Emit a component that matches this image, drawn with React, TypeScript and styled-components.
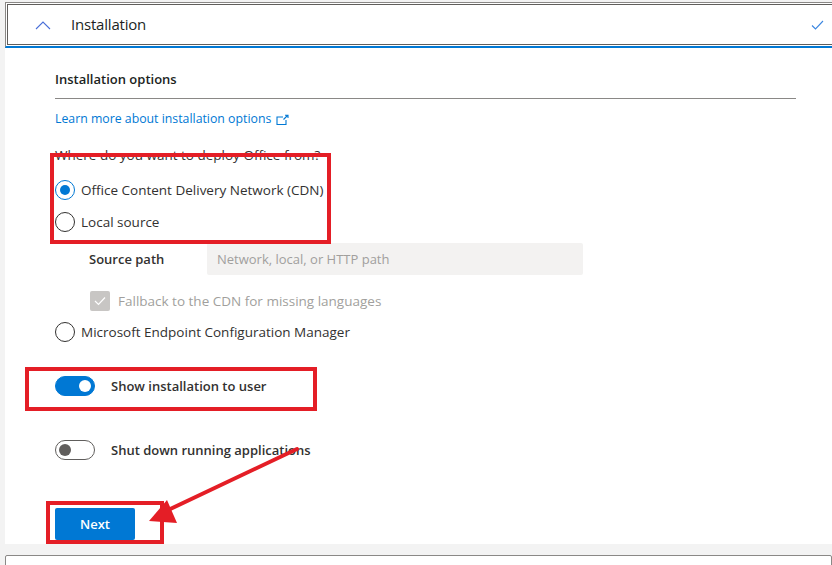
import React from "react";
import styled, { createGlobalStyle } from "styled-components";

const Global = createGlobalStyle`
  html, body { margin: 0; padding: 0; background: #f3f3f3; }
  body { font-family: "Segoe UI", "Open Sans", sans-serif; color: #323130; }
  * { box-sizing: border-box; }
`;

const Root = styled.div`
  position: relative;
  width: 832px;
  height: 565px;
  overflow: hidden;
  padding-left: 5px;
  background: #f3f3f3;
`;

const Card = styled.div`
  background: #ffffff;
  padding-bottom: 4px;
`;

const HeaderOuter = styled.div`
  margin-top: 2px;
  border-top: 1px solid #8a8886;
  border-left: 1px solid #8a8886;
  border-bottom: 2px solid #0078d4;
  padding: 1px 0 1px 1px;
`;

const HeaderInner = styled.div`
  height: 41px;
  border: 1px solid #605e5c;
  border-right: none;
  display: flex;
  align-items: center;
  padding-left: 27px;
  padding-right: 8px;
`;

const HeaderTitle = styled.div`
  flex: 1;
  margin-left: 20px;
  padding-bottom: 2px;
  font-size: 15px;
  color: #201f1e;
  letter-spacing: -0.2px;
`;

const Body = styled.div`
  padding-left: 50px;
  padding-right: 36px;
  font-size: 13px;
`;

const SectionTitle = styled.div`
  margin-top: 21px;
  font-weight: 600;
  font-size: 13px;
  line-height: 20px;
  padding-bottom: 9px;
  border-bottom: 1px solid #8a8886;
  color: #201f1e;
`;

const Link = styled.a`
  display: inline-flex;
  align-items: center;
  gap: 5px;
  margin-top: 10px;
  line-height: 20px;
  color: #0078d4;
  text-decoration: none;
  font-size: 12.3px;
`;

const Question = styled.div`
  margin-top: 16px;
  line-height: 20px;
  font-size: 13.5px;
`;

const OptionRow = styled.div<{ $top: number; $indent?: number }>`
  display: flex;
  align-items: center;
  gap: 6px;
  margin-top: ${(p) => p.$top}px;
  margin-left: ${(p) => p.$indent ?? 0}px;
  height: 20px;
  line-height: 20px;
  font-size: 13.5px;
`;

const Radio = styled.span<{ $checked?: boolean }>`
  width: 20px;
  height: 20px;
  border-radius: 50%;
  border: 1px solid ${(p) => (p.$checked ? "#0078d4" : "#323130")};
  display: inline-flex;
  align-items: center;
  justify-content: center;
  flex-shrink: 0;
  &::after {
    content: "";
    width: 10px;
    height: 10px;
    border-radius: 50%;
    background: ${(p) => (p.$checked ? "#0078d4" : "transparent")};
  }
`;

const SourceRow = styled.div`
  display: flex;
  align-items: center;
  margin-top: 11px;
  margin-left: 34px;
`;

const FieldLabel = styled.div`
  width: 118px;
  font-weight: 600;
  font-size: 13px;
`;

const Input = styled.div`
  width: 376px;
  height: 32px;
  background: #f3f2f1;
  border-radius: 2px;
  color: #a19f9d;
  font-size: 13px;
  display: flex;
  align-items: center;
  padding-left: 10px;
`;

const CheckBox = styled.span`
  width: 20px;
  height: 20px;
  border-radius: 2px;
  background: #c8c6c4;
  display: inline-flex;
  align-items: center;
  justify-content: center;
  flex-shrink: 0;
`;

const DisabledText = styled.span`
  color: #a19f9d;
  margin-left: 2px;
`;

const ToggleRow = styled.div<{ $top: number }>`
  display: flex;
  align-items: center;
  gap: 16px;
  margin-top: ${(p) => p.$top}px;
  height: 20px;
  font-weight: 600;
  font-size: 13px;
`;

const Toggle = styled.span<{ $on?: boolean }>`
  position: relative;
  width: 40px;
  height: 20px;
  border-radius: 10px;
  background: ${(p) => (p.$on ? "#0078d4" : "#ffffff")};
  border: 1px solid ${(p) => (p.$on ? "#0078d4" : "#605e5c")};
  flex-shrink: 0;
  &::after {
    content: "";
    position: absolute;
    top: 3px;
    left: ${(p) => (p.$on ? "23px" : "3px")};
    width: 12px;
    height: 12px;
    border-radius: 50%;
    background: ${(p) => (p.$on ? "#ffffff" : "#605e5c")};
  }
`;

const Button = styled.button`
  margin-top: 48px;
  width: 80px;
  height: 32px;
  border: none;
  border-radius: 2px;
  background: #0078d4;
  color: #ffffff;
  font-family: inherit;
  font-weight: 600;
  font-size: 13px;
  display: block;
`;

const NextCard = styled.div`
  margin-top: 11px;
  height: 30px;
  background: #ffffff;
  border: 1px solid #8a8886;
  border-radius: 2px;
`;

const RedBox = styled.div<{ $x: number; $y: number; $w: number; $h: number }>`
  position: absolute;
  left: ${(p) => p.$x}px;
  top: ${(p) => p.$y}px;
  width: ${(p) => p.$w}px;
  height: ${(p) => p.$h}px;
  border: 4px solid #e41e26;
  pointer-events: none;
`;

const ArrowSvg = styled.svg`
  position: absolute;
  left: 0;
  top: 0;
  pointer-events: none;
`;

export default function App() {
  return (
    <>
      <Global />
      <Root>
        <Card>
          <HeaderOuter>
            <HeaderInner>
              <svg width="16" height="10" viewBox="0 0 16 10">
                <path d="M1 9 L8 2 L15 9" fill="none" stroke="#4a6fd8" strokeWidth="1.1" />
              </svg>
              <HeaderTitle>Installation</HeaderTitle>
              <svg width="13" height="10" viewBox="0 0 13 10">
                <path d="M1 5.5 L4.5 9 L12 1" fill="none" stroke="#3b86e0" strokeWidth="1.1" />
              </svg>
            </HeaderInner>
          </HeaderOuter>
          <Body>
            <SectionTitle>Installation options</SectionTitle>
            <Link>
              Learn more about installation options
              <svg width="13" height="11" viewBox="0 0 13 11">
                <path d="M7 3 H1 V10.5 H10 V6" fill="none" stroke="#0078d4" strokeWidth="1.1" />
                <path d="M7.5 5.5 L11.5 1.5 M9 1.2 H12 V4" fill="none" stroke="#0078d4" strokeWidth="1.1" />
              </svg>
            </Link>
            <Question>Where do you want to deploy Office from?</Question>
            <OptionRow $top={15}>
              <Radio $checked />
              Office Content Delivery Network (CDN)
            </OptionRow>
            <OptionRow $top={12}>
              <Radio />
              Local source
            </OptionRow>
            <SourceRow>
              <FieldLabel>Source path</FieldLabel>
              <Input>Network, local, or HTTP path</Input>
            </SourceRow>
            <OptionRow $top={16} $indent={35}>
              <CheckBox>
                <svg width="12" height="10" viewBox="0 0 12 10">
                  <path d="M1 5 L4.5 8.5 L11 1.5" fill="none" stroke="#ffffff" strokeWidth="1.2" />
                </svg>
              </CheckBox>
              <DisabledText>Fallback to the CDN for missing languages</DisabledText>
            </OptionRow>
            <OptionRow $top={11}>
              <Radio />
              Microsoft Endpoint Configuration Manager
            </OptionRow>
            <ToggleRow $top={34}>
              <Toggle $on />
              Show installation to user
            </ToggleRow>
            <ToggleRow $top={44}>
              <Toggle />
              Shut down running applications
            </ToggleRow>
            <Button>Next</Button>
          </Body>
        </Card>
        <NextCard />
        <RedBox $x={50} $y={153} $w={281} $h={91} />
        <RedBox $x={25} $y={367} $w={292} $h={44} />
        <RedBox $x={46} $y={501} $w={118} $h={43} />
        <ArrowSvg width="832" height="565" viewBox="0 0 832 565">
          <line x1="297" y1="449" x2="166" y2="511" stroke="#e41e26" strokeWidth="4" strokeLinecap="round" />
          <polygon points="149,521 177,523 167,500" fill="#e41e26" />
        </ArrowSvg>
      </Root>
    </>
  );
}
